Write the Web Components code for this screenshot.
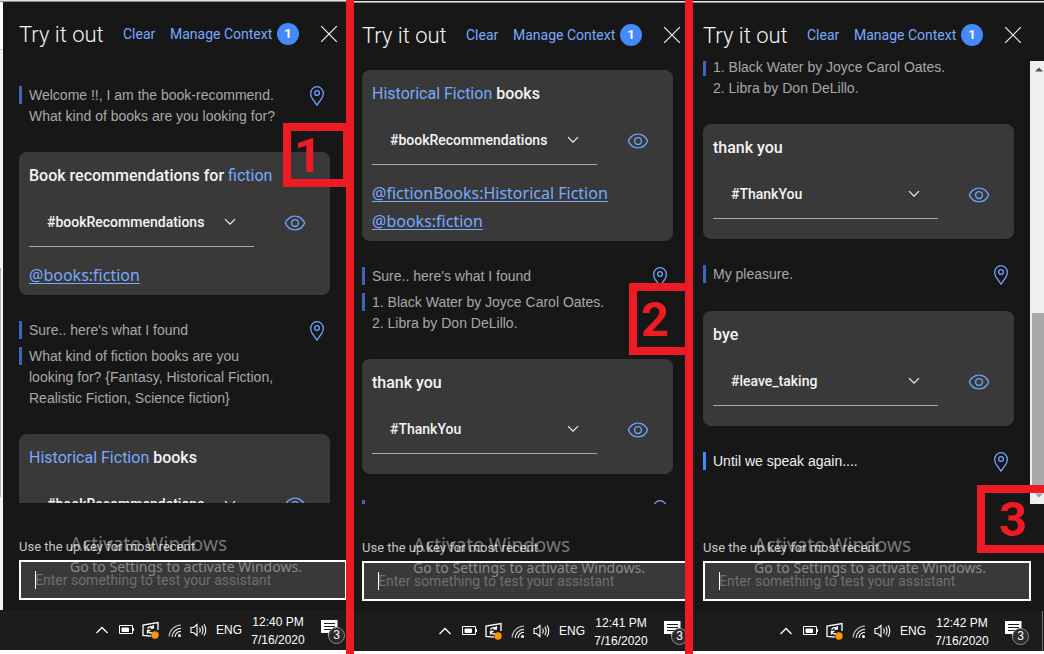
<!DOCTYPE html>
<html lang="en">
<head>
<meta charset="utf-8">
<meta name="viewport" content="width=device-width, initial-scale=1">
<title>Try it out</title>
<style>
html, body { margin: 0; height: 100%; background: #fff; }
body { font-family: "Liberation Sans", Arial, sans-serif; overflow: hidden; }
</style>
</head>
<body>
<step-board>
  <try-panel style="--inset:16px; --lead:25px" class="first" step="1" time="12:40 PM" date="7/16/2020">
    <bot-reply pin>Welcome !!, I am the book-recommend.<br>What kind of books are you looking for?</bot-reply>
    <user-card intent="#bookRecommendations">Book recommendations for <b>fiction</b><a slot="entity" href="#books">@books:fiction</a></user-card>
    <bot-reply pin>Sure.. here's what I found<span slot="more">What kind of fiction books are you<br>looking for? {Fantasy, Historical Fiction,<br>Realistic Fiction, Science fiction}</span></bot-reply>
    <user-card intent="#bookRecommendations"><b>Historical Fiction</b> books<a slot="entity" href="#books">@books:fiction</a></user-card>
  </try-panel>
  <try-panel style="--inset:8px; --lead:9px" step="2" time="12:41 PM" date="7/16/2020">
    <user-card intent="#bookRecommendations"><b>Historical Fiction</b> books<a slot="entity" href="#fictionBooks">@fictionBooks:Historical Fiction</a><a slot="entity" href="#books">@books:fiction</a></user-card>
    <bot-reply pin>Sure.. here's what I found<span slot="more">1. Black Water by Joyce Carol Oates.<br>2. Libra by Don DeLillo.</span></bot-reply>
    <user-card intent="#ThankYou">thank you</user-card>
    <bot-reply pin></bot-reply>
  </try-panel>
  <try-panel style="--inset:10px; --lead:0px" class="end" step="3" time="12:42 PM" date="7/16/2020">
    <bot-reply>1. Black Water by Joyce Carol Oates.<br>2. Libra by Don DeLillo.</bot-reply>
    <user-card intent="#ThankYou">thank you</user-card>
    <bot-reply pin>My pleasure.</bot-reply>
    <user-card intent="#leave_taking">bye</user-card>
    <bot-reply pin latest>Until we speak again....</bot-reply>
  </try-panel>
</step-board>

<script>
const make = (name, html, ready) => {
  const tpl = document.createElement('template');
  tpl.innerHTML = html;
  customElements.define(name, class extends HTMLElement {
    constructor() {
      super();
      this.attachShadow({ mode: 'open' }).append(tpl.content.cloneNode(true));
    }
    connectedCallback() { if (ready) ready.call(this, this.shadowRoot); }
  });
};

/* Three captures side by side, divided by red rules */
make('step-board', `
<style>
:host { display: grid; grid-template-columns: 354fr 339fr 351fr; height: 100vh; }
</style>
<slot></slot>`);

/* Numbered red frame */
make('step-tag', `
<style>
:host { display: flex; box-sizing: border-box; border: 8px solid #ed1c24; color: #ed1c24;
  font: bold 49px/1 Roboto, "Liberation Sans", sans-serif; align-items: center; justify-content: flex-start; }
</style>
<slot></slot>`);

make('bot-reply', `
<style>
:host { display: grid; grid-template-columns: 1fr auto; align-items: start; min-height: 22px; color: #a8a8a8;
  font-size: 14px; line-height: 21px; --bar: #3a67b9; }
:host([latest]) { color: #f0f0f0; --bar: #4589ff; }
.lines { display: grid; gap: 5px; }
p, ::slotted(span) { display: block; min-height: 21px; margin: 0; padding-left: 10px; white-space: nowrap;
  background: linear-gradient(var(--bar), var(--bar)) 0 1px / 3px 18px no-repeat; }
button { display: none; margin: 1px 6px 0 0; padding: 0; border: 0; background: none; height: 20px; }
:host([pin]) button { display: block; }
svg { display: block; }
</style>
<div class="lines"><p><slot></slot></p><slot name="more"></slot></div>
<button aria-label="Go to node"><svg width="14" height="20" viewBox="0 0 14 20" fill="none" stroke="#6ea3ff" stroke-width="1.3"><path d="M7 19.2L2.1 12.2C1.100 10.700.7 9 .7 7.200A6.300 6.500 0 0 1 13.300 7.200C13.300 9 12.900 10.700 11.900 12.200Z"/><circle cx="7" cy="7" r="2.400"/></svg></button>`);

make('user-card', `
<style>
:host { display: block; box-sizing: border-box; border-radius: 8px; background: #393939; color: #f4f4f4;
  padding: 10px 10px 6px; }
.said { font: 500 16px/28px Roboto, "Noto Sans", sans-serif; }
::slotted(b) { font-weight: 400; color: #78a9ff; }
.row { display: grid; grid-template-columns: 225px 1fr; align-items: center; margin: 9px 0 14px; }
.pick { display: grid; border-bottom: 1px solid #a8a8a8; align-items: center; padding-bottom: 2px; }
.pick > * { grid-area: 1 / 1; }
select { appearance: none; width: 100%; height: 45px; margin: 0; padding: 0 34px 0 18px; border: 0; background: none;
  color: inherit; font: 500 14px/20px Roboto, "Noto Sans", sans-serif; }
.pick svg { justify-self: end; margin-right: 18px; pointer-events: none; }
button { justify-self: start; margin-left: 30px; padding: 0; border: 0; background: none; height: 22px; }
svg { display: block; }
.links { display: grid; justify-items: start; }
::slotted(a) { font: 16px/28px "Noto Sans", "Open Sans", sans-serif; color: #78a9ff; text-decoration: underline; text-underline-offset: 2px; }
</style>
<div class="said"><slot></slot></div>
<div class="row">
  <div class="pick"><select aria-label="Intent"><option></option></select>
    <svg width="12" height="8" viewBox="0 0 12 8" fill="none" stroke="#f4f4f4" stroke-width="1.2"><path d="M1 1.200L6 6.200L11 1.200"/></svg></div>
  <button aria-label="Show intents"><svg width="22" height="22" viewBox="0 0 32 32" fill="#6ea3ff"><path d="M30.940 15.660A16.690 16.690 0 0 0 16 5 16.690 16.690 0 0 0 1.060 15.660a1 1 0 0 0 0 .680A16.690 16.690 0 0 0 16 27 16.690 16.690 0 0 0 30.940 16.340 1 1 0 0 0 30.940 15.660ZM16 25c-5.300 0-10.900-3.930-12.930-9C5.100 10.930 10.700 7 16 7s10.900 3.930 12.930 9C26.900 21.070 21.300 25 16 25Z"/><path d="M16 10a6 6 0 1 0 6 6A6 6 0 0 0 16 10Zm0 10a4 4 0 1 1 4-4A4 4 0 0 1 16 20Z"/></svg></button>
</div>
<div class="links"><slot name="entity"></slot></div>`, function (root) {
  root.querySelector('option').textContent = this.getAttribute('intent');
});

make('task-tray', `
<style>
:host { display: grid; grid-template-columns: 24px 23px 26px 22px 26px 30px 64px 1fr; align-items: center; height: 40px;
  box-sizing: border-box; padding-left: calc(var(--inset) + 76px); background: #1c1c1c; color: #fff;
  font: 12px/18px "Liberation Sans", Arial, sans-serif; overflow: hidden; }
svg { display: block; }
.clock { text-align: center; white-space: nowrap; margin: 2px 0 0; }
.note { position: relative; margin-left: 11px; width: 26px; height: 24px; }
.count { position: absolute; left: 7px; top: 9px; width: 15px; height: 15px; border: 1px solid #8c8c8c; border-radius: 50%;
  background: #2b2b2b; text-align: center; font-size: 12px; line-height: 15px; }
</style>
<svg width="14" height="10" viewBox="0 0 14 10" fill="none" stroke="#fff" stroke-width="1.300"><path d="M1.500 8L7 2.500L12.500 8"/></svg>
<svg width="16" height="10" viewBox="0 0 16 10" fill="none" stroke="#fff"><path d="M.5.5H13.500V8.500H.5ZM14.500 3V6"/><path d="M3 3H9.500V6.500H3Z" fill="#fff"/></svg>
<svg width="18" height="18" viewBox="0 0 18 18" fill="none" stroke="#fff" stroke-width="1.300"><path d="M9 15.200L1 14.500V4L16 1.500V9"/><path d="M5.500 7.500C7 5.500 9.500 5 11 6.500M11.300 4V7H8.500M5.500 12.500V9.500H8.500M6 10.500C7 12 8.500 12.500 10 11.500"/><circle cx="13" cy="14" r="3.700" fill="#ff9500" stroke="none"/></svg>
<svg width="14" height="15" viewBox="0 0 14 15" fill="none" stroke="#fff" stroke-width="1.100"><path d="M1 13.500A12.500 12.500 0 0 1 13 2" stroke="#bbb"/><path d="M4 14A9.500 9.500 0 0 1 13 5.200M7 14A6.500 6.500 0 0 1 13 8.300"/><circle cx="11.500" cy="12.500" r="1.500" fill="#fff" stroke="none"/></svg>
<svg width="18" height="16" viewBox="0 0 18 16" fill="none" stroke="#fff" stroke-width="1.100"><path d="M1 5.500H3.500L7 2.500V13.500L3.500 10.500H1Z"/><path d="M9.500 5.500Q11 8 9.500 10.500M11.800 3.800Q14.300 8 11.800 12.200M14 2.200Q17.600 8 14 13.800"/></svg>
<span>ENG</span>
<p class="clock"><span class="time"></span><br><span class="date"></span></p>
<div class="note"><svg width="17" height="20" viewBox="0 0 17 20"><path d="M0 2H16.500V15H10L7 18.500V15H0Z" fill="#fff"/><path d="M3 5.500H14M3 8.500H14M3 11.500H14" stroke="#1c1c1c"/></svg><span class="count">3</span></div>`);

make('try-panel', `
<style>
:host { position: relative; display: grid; grid-template-rows: 3px minmax(0, 1fr) 3px; overflow: hidden;
  border-right: 8px solid #ed1c24; }
:host(.end) { border-right: 0; }
:host(.first) { grid-template-rows: 2px minmax(0, 1fr) 4px; }
.edge { background: linear-gradient(#171717 1px, #e6e6e6 1px 2px, #8b8b8b 2px); }
:host(.first) .edge { background: linear-gradient(#e0e0e0 1px, #8b8b8b 1px); }
.screen { display: grid; grid-template-rows: minmax(0, 1fr) 40px; min-height: 0; }
.app { display: grid; grid-template-rows: 58px minmax(0, 1fr) auto; min-height: 0; background: #171717; overflow: hidden; }
:host(.first) .app { padding-left: 3px; background:
  linear-gradient(#b0b0b0, #b0b0b0) 0 266px / 1px 229px no-repeat,
  linear-gradient(#fff 47px, #d0d0d0 47px 48px, #f4f4f4 48px) 0 0 / 3px 100% no-repeat, #171717; }
:host(.end) task-tray { background: linear-gradient(#6a6a6a, #6a6a6a) calc(100% - 1px) 0 / 1px 100% no-repeat, #1c1c1c; }
header { display: grid; grid-template-columns: 104px 47px 107px 22px 1fr; align-items: center;
  padding: 6px 0 0 var(--inset); white-space: nowrap; }
h1 { margin: 0; padding-top: 2px; font: 300 22px/28px Roboto, sans-serif; color: #f4f4f4; }
a { font: 14px/20px Roboto, sans-serif; color: #78a9ff; text-decoration: none; }
.badge { width: 22px; height: 22px; border-radius: 50%; background: #4589ff; color: #fff; text-align: center;
  font: 700 13px/22px Roboto, sans-serif; }
.close { justify-self: start; margin-left: 22px; padding: 0; border: 0; background: none; height: 16px; }
svg { display: block; }
.view { display: grid; grid-template-columns: minmax(0, 1fr) auto; min-height: 0; overflow: hidden; }
.chat { display: flex; flex-direction: column; gap: 25px; width: 311px; min-height: 0; overflow: hidden;
  padding: var(--lead) 0 0 var(--inset); }
::slotted(*) { flex: none; }
:host(.end) .chat { justify-content: flex-end; padding-bottom: 31px; }
.bar { display: none; width: 14px; background: #f0f0f0; grid-template-rows: 17px 235fr 174fr 17px; }
:host(.end) .bar { display: grid; }
.bar svg { place-self: center; margin-left: 3px; }
.thumb { margin-left: 2px; background: #a8a8a8; }
form { padding: 34px 0 10px var(--inset); margin: 0; }
label { display: block; font: 13px/20px Roboto, sans-serif; color: #c6c6c6; }
.field { position: relative; margin-top: 3px; width: 328px; }
input { box-sizing: border-box; display: block; width: 100%; height: 40px; border: 2px solid #fff; border-radius: 0;
  background: #393939; color: #f4f4f4; padding: 0 14px; font: 14px/20px Roboto, "Noto Sans", sans-serif; outline: 0; }
input::placeholder { color: #6f6f6f; opacity: 1; }
.caret { position: absolute; left: 16px; top: 11px; width: 1px; height: 18px; background: #fff; }
.mark { position: absolute; left: calc(var(--inset) + 51px); bottom: 75px; margin: 0; color: rgba(255,255,255,.42);
  font: 14px/22px "Noto Sans", "Open Sans", sans-serif; white-space: nowrap; pointer-events: none; }
.mark span { display: block; font-size: 19px; line-height: 24px; }
:host(.first) .mark { left: 70px; bottom: 76px; }
:host(.first) task-tray { --inset: 19px; }
step-tag { position: absolute; right: -5px; top: 123px; width: 68px; height: 64px; padding-left: 3px; }
:host([step="2"]) step-tag { right: -8px; top: 283px; width: 64px; height: 72px; padding-left: 4px; }
:host([step="3"]) step-tag { right: -8px; top: 485px; width: 75px; height: 68px; padding-left: 14px; }
</style>
<div class="edge"></div>
<div class="screen">
  <section class="app">
    <header>
      <h1>Try it out</h1><a href="#clear">Clear</a><a href="#context">Manage Context</a><span class="badge">1</span>
      <button class="close" aria-label="Close"><svg width="16" height="16" viewBox="0 0 16 16" fill="none" stroke="#f4f4f4" stroke-width="1.200"><path d="M0 0L16 16M16 0L0 16"/></svg></button>
    </header>
    <div class="view">
      <div class="chat"><slot></slot></div>
      <div class="bar">
        <svg width="8" height="5" viewBox="0 0 8 5" fill="#505050"><path d="M0 4.500L4 .5L8 4.500Z"/></svg>
        <i></i><i class="thumb"></i>
        <svg width="8" height="5" viewBox="0 0 8 5" fill="#a0a0a0"><path d="M0 .5L4 4.500L8 .5Z"/></svg>
      </div>
    </div>
    <form>
      <label for="q">Use the up key for most recent</label>
      <div class="field"><input id="q" type="text" placeholder="Enter something to test your assistant"><i class="caret"></i></div>
    </form>
  </section>
  <task-tray></task-tray>
</div>
<p class="mark"><span>Activate Windows</span>Go to Settings to activate Windows.</p>
<step-tag></step-tag>`, function (root) {
  root.querySelector('step-tag').textContent = this.getAttribute('step');
  const tray = root.querySelector('task-tray').shadowRoot;
  tray.querySelector('.time').textContent = this.getAttribute('time');
  tray.querySelector('.date').textContent = this.getAttribute('date');
});
</script>
</body>
</html>
